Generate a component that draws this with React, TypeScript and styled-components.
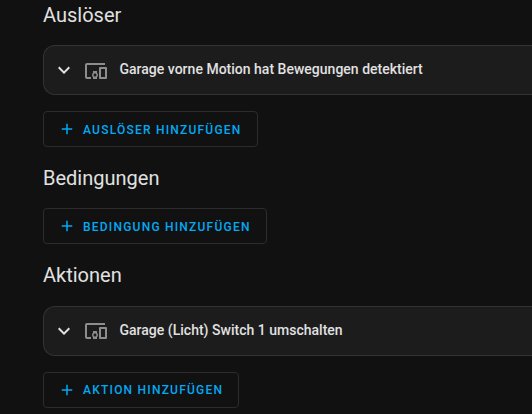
import styled, { createGlobalStyle } from 'styled-components'

const ICONS = {
  chevron: 'M7.41,8.58L12,13.17L16.59,8.58L18,10L12,16L6,10L7.41,8.58Z',
  plus: 'M19,13H13V19H11V13H5V11H11V5H13V11H19V13Z',
  devices:
    'M3 6H21V4H3C1.9 4 1 4.9 1 6V18C1 19.1 1.9 20 3 20H7V18H3V6M13 12H9V13.78C8.39 14.33 8 15.11 8 16C8 16.89 8.39 17.67 9 18.22V20H13V18.22C13.61 17.67 14 16.88 14 16S13.61 14.33 13 13.78V12M11 17.5C10.17 17.5 9.5 16.83 9.5 16S10.17 14.5 11 14.5 12.5 15.17 12.5 16 11.83 17.5 11 17.5M22 8H16C15.5 8 15 8.5 15 9V19C15 19.5 15.5 20 16 20H22C22.5 20 23 19.5 23 19V9C23 8.5 22.5 8 22 8M21 18H17V10H21V18Z',
}

const Icon = ({ name, size = 24 }: { name: keyof typeof ICONS; size?: number }) => (
  <svg width={size} height={size} viewBox="0 0 24 24" fill="currentColor">
    <path d={ICONS[name]} />
  </svg>
)

type SectionProps = {
  title: string
  item?: string
  addLabel: string
  headingHeight: number
  headingGap?: number
  iconTop?: number
  labelDrop?: number
}

const Section = ({
  title,
  item,
  addLabel,
  headingHeight,
  headingGap = 18,
  iconTop = 12,
  labelDrop = 2,
}: SectionProps) => (
  <section>
    <Heading $height={headingHeight} $gap={headingGap}>
      {title}
    </Heading>
    {item && (
      <Card>
        <ExpandIcon $top={12}>
          <Icon name="chevron" />
        </ExpandIcon>
        <TypeIcon $top={iconTop}>
          <Icon name="devices" />
        </TypeIcon>
        <ItemName>{item}</ItemName>
      </Card>
    )}
    <AddButton type="button">
      <Icon name="plus" size={18} />
      <AddLabel $drop={labelDrop}>{addLabel}</AddLabel>
    </AddButton>
  </section>
)

const App = () => (
  <>
    <GlobalStyle />
    <Editor>
      <Section
        title="Auslöser"
        item="Garage vorne Motion hat Bewegungen detektiert"
        addLabel="Auslöser hinzufügen"
        headingHeight={45}
        iconTop={13}
      />
      <Section title="Bedingungen" addLabel="Bedingung hinzufügen" headingHeight={61} />
      <Section
        title="Aktionen"
        item="Garage (Licht) Switch 1 umschalten"
        addLabel="Aktion hinzufügen"
        headingHeight={62}
        headingGap={19}
        labelDrop={0}
      />
    </Editor>
  </>
)

const GlobalStyle = createGlobalStyle`
  body {
    margin: 0;
    background: #111111;
    color: #e1e1e1;
    font-family: Roboto, 'Noto Sans', sans-serif;
    overflow: hidden;
  }
`

const Editor = styled.main`
  height: 414px;
  padding-left: 43px;
  box-sizing: border-box;
  overflow: hidden;
`

const Heading = styled.h2<{ $height: number; $gap: number }>`
  display: flex;
  align-items: flex-end;
  height: ${({ $height }) => $height}px;
  box-sizing: border-box;
  margin: 0;
  padding-bottom: ${({ $gap }) => $gap}px;
  font-size: 20px;
  font-weight: 400;
  line-height: 24px;
`

const Card = styled.div`
  display: flex;
  height: 50px;
  box-sizing: border-box;
  margin-bottom: 16px;
  padding-left: 8px;
  border: 1px solid #333333;
  border-right: none;
  border-radius: 12px 0 0 12px;
  background: #1c1c1c;
`

const IconSlot = styled.span<{ $top: number }>`
  display: flex;
  width: 24px;
  height: 24px;
  margin-top: ${({ $top }) => $top}px;
`

const ExpandIcon = styled(IconSlot)`
  margin-right: 8px;
`

const TypeIcon = styled(IconSlot)`
  margin-right: 11.5px;
  color: #8d8d8d;
`

const ItemName = styled.h3`
  margin: 0;
  font-size: 14px;
  font-weight: 500;
  line-height: 46px;
  letter-spacing: 0.01px;
  white-space: nowrap;
`

const AddButton = styled.button`
  display: flex;
  align-items: center;
  gap: 7px;
  height: 36px;
  padding: 0 15px 0 14px;
  border: 1px solid #2c2c2c;
  border-radius: 4px;
  background: transparent;
  color: #03a9f4;
  font-family: inherit;
  font-size: 12px;
  font-weight: 500;
  letter-spacing: 1.22px;
  text-transform: uppercase;
  white-space: nowrap;
`

const AddLabel = styled.span<{ $drop: number }>`
  padding-top: ${({ $drop }) => $drop}px;
`

export default App
